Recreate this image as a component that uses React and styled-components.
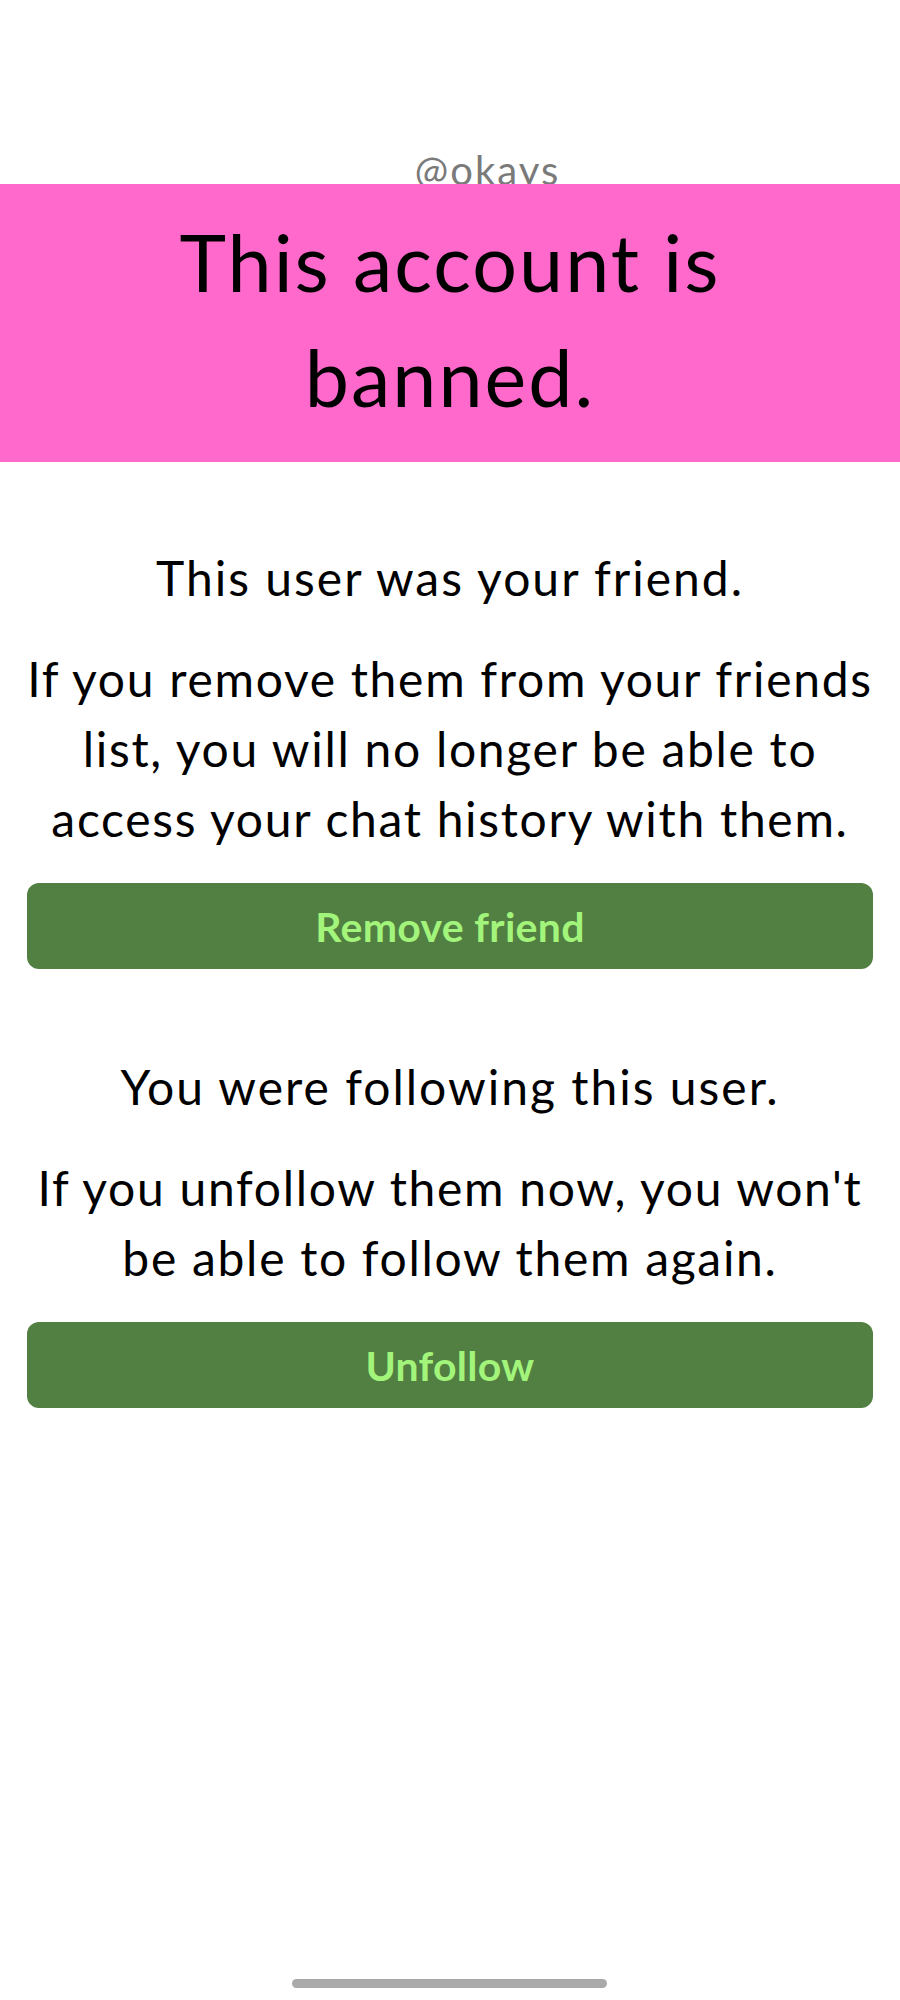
import React from 'react'
import styled, {createGlobalStyle} from 'styled-components'

const GlobalStyle = createGlobalStyle`
  html, body {
    margin: 0;
    padding: 0;
    background: #fff;
  }
  body {
    font-family: Lato, "Noto Sans", sans-serif;
    color: #000;
  }
`

const Page = styled.div`
  width: 900px;
  min-height: 2000px;
  display: flex;
  flex-direction: column;
  position: relative;
`

const Header = styled.div`
  height: 184px;
  display: flex;
  align-items: flex-end;
  justify-content: center;
`

const Handle = styled.div`
  font-size: 40px;
  letter-spacing: 2px;
  line-height: 40px;
  color: #7a7a7a;
  margin-left: 75px;
  margin-bottom: -6px;
`

// sits over the handle's descenders, as in the app
const Banner = styled.div`
  position: relative;
  background: #ff69cc;
  padding: 20px 0 28px;
  display: flex;
  justify-content: center;
  text-align: center;
`

const Title = styled.h1`
  margin: 0;
  font-size: 79px;
  font-weight: 400;
  letter-spacing: 2px;
  line-height: 115px;
  width: 600px;
`

const Content = styled.div`
  padding: 0 27px;
  display: flex;
  flex-direction: column;
`

const Section = styled.section`
  display: flex;
  flex-direction: column;
  margin-top: ${p => p.top}px;
`

const Lead = styled.p`
  margin: 0;
  font-size: 48px;
  letter-spacing: 2px;
  line-height: 70px;
  text-align: center;
`

const Note = styled(Lead)`
  margin: 31px -6px 0;
  letter-spacing: 1.7px;
`

const ActionButton = styled.button`
  margin-top: 29px;
  height: 86px;
  width: 100%;
  border: none;
  border-radius: 12px;
  background: #527f42;
  color: #a2f47a;
  font-family: Lato, "Noto Sans", sans-serif;
  font-size: 41px;
  font-weight: 700;
  letter-spacing: 0.3px;
  cursor: pointer;
`

const HomeBar = styled.div`
  position: absolute;
  left: 292px;
  top: 1979px;
  width: 315px;
  height: 9px;
  border-radius: 5px;
  background: #aaa;
`

export default function App() {
  return (
    <>
      <GlobalStyle />
      <Page>
        <Header>
          <Handle>@okays</Handle>
        </Header>
        <Banner>
          <Title>This account is banned.</Title>
        </Banner>
        <Content>
          <Section top={81}>
            <Lead>This user was your friend.</Lead>
            <Note>
              If you remove them from your friends list, you will no longer be
              able to access your chat history with them.
            </Note>
            <ActionButton>Remove friend</ActionButton>
          </Section>
          <Section top={83}>
            <Lead>You were following this user.</Lead>
            <Note>
              If you unfollow them now, you won't be able to follow them again.
            </Note>
            <ActionButton>Unfollow</ActionButton>
          </Section>
        </Content>
        <HomeBar />
      </Page>
    </>
  )
}
